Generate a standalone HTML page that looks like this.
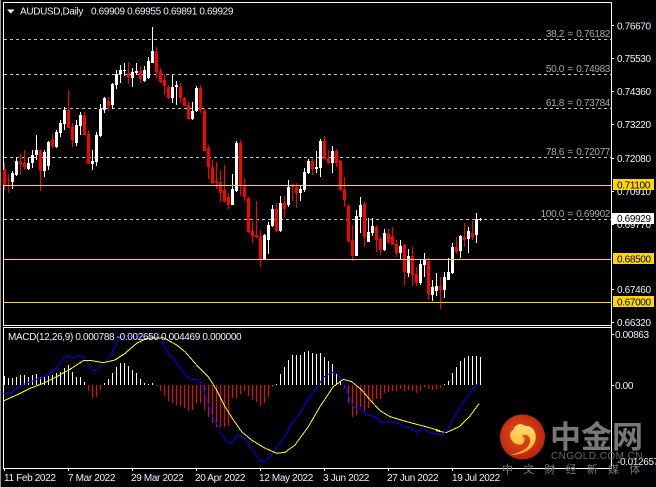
<!DOCTYPE html>
<html><head><meta charset="utf-8"><style>
html,body{margin:0;padding:0;background:#000;width:656px;height:487px;overflow:hidden}
svg{display:block}
text{font-family:"Liberation Sans",sans-serif;font-size:10px;fill:#fff;letter-spacing:-.35px}
.f{fill:#a8a8a8;text-anchor:end;word-spacing:1px}
.k{fill:#000}
.a{fill:#e8f2ff}
</style></head><body>
<svg width="656" height="487" viewBox="0 0 656 487" xmlns="http://www.w3.org/2000/svg">
<defs>
<radialGradient id="rg" cx=".45" cy=".45" r=".6"><stop offset="0" stop-color="#e8541c"/><stop offset="1" stop-color="#b8200e"/></radialGradient>
<linearGradient id="yg" x1="0" y1="0" x2="0" y2="1"><stop offset="0" stop-color="#ffd97a"/><stop offset=".6" stop-color="#ffc53c"/><stop offset="1" stop-color="#f49a1c"/></linearGradient>
</defs>
<rect width="656" height="487" fill="#000"/>
<g fill="none" stroke-width="1" shape-rendering="crispEdges">
<path stroke="#999" d="M.5 0V487"/>
<path stroke="#fff" d="M3 2.5H612M3.5 2V325M611.5 2V468M3 325.5H612M3 327.5H612M3.5 327V468M3 468.5H612"/>
<path stroke="#fff" d="M611 25.5h3M611 58.5h3M611 91.5h3M611 124.5h3M611 158.5h3M611 191.5h3M611 224.5h3M611 289.5h3M611 322.5h3M611 334.5h3M611 385.5h3M4.5 468v3M68.5 468v3M132.5 468v3M196.5 468v3M260.5 468v3M324.5 468v3M388.5 468v3M452.5 468v3"/>
<path stroke="#c0c0c0" stroke-dasharray="3 3" d="M4 39.5H611M4 74.5H611M4 108.5H611M4 157.5H611M4 219.5H611"/>

<!-- white wicks -->
<path stroke="#fff" d="M12.5 171V189M16.5 158V176M28.5 158V170M32.5 150V168M36.5 135V160M44.5 150V177M48.5 141V170M56.5 130V148M60.5 120V137M64.5 107V130M76.5 120V146M80.5 112V135M92.5 150V170M96.5 132V166M100.5 104V137M104.5 97V113M112.5 83V109M116.5 70V89M120.5 65V83M124.5 63V76M132.5 68V87M136.5 63V75M144.5 66V82M148.5 57V79M152.5 27V63M172.5 75V103M176.5 81V105M192.5 102V120M196.5 86V112M232.5 174V205M236.5 141V192M264.5 234V259M268.5 222V254M272.5 205V227M280.5 196V232M288.5 180V207M300.5 185V201M304.5 168V192M308.5 159V174M316.5 151V173M320.5 139V177M332.5 146V173M356.5 210V256M360.5 197V233M368.5 218V242M372.5 218V236M384.5 229V251M400.5 240V259M408.5 249V277M420.5 260V285M424.5 253V277M432.5 280V301M436.5 273V296M444.5 272V298M448.5 258V280M452.5 243V274M460.5 235V258M468.5 227V253M476.5 213V243M480.5 218V221"/>
<!-- white bodies -->
<path stroke="#fff" stroke-width="3" d="M12.5 173V182M16.5 161V175M28.5 163V169M32.5 155V163M36.5 150V155M44.5 152V171M48.5 142V166M56.5 132V147M60.5 123V133M64.5 110V124M76.5 125V143M80.5 115V126M92.5 161V164M96.5 135V162M100.5 109V136M104.5 98V110M112.5 84V105M116.5 74V85M120.5 70V74M124.5 70V71M132.5 72V78M136.5 71V73M144.5 70V81M148.5 61V78M152.5 51V63M172.5 87V98M176.5 85V87M192.5 111V119M196.5 88V111M232.5 189V205M236.5 143V191M264.5 235V259M268.5 225V240M272.5 209V226M280.5 203V231M288.5 187V205M300.5 189V193M304.5 172V190M308.5 161V173M316.5 167V169M320.5 141V168M332.5 151V163M356.5 216V256M360.5 205V217M368.5 232V242M372.5 226V233M384.5 233V250M400.5 246V253M408.5 256V273M420.5 264V283M424.5 260V265M432.5 287V295M436.5 286V291M444.5 277V290M448.5 272V280M452.5 247V273M460.5 236V251M468.5 231V239M476.5 219V235M480.5 219V220"/>
<!-- red wicks -->
<path stroke="#ff0000" d="M4.5 163V190M8.5 174V193M20.5 154V175M24.5 150V170M40.5 150V191M52.5 134V148M68.5 90V128M72.5 123V147M84.5 112V135M88.5 131V164M108.5 97V111M128.5 62V84M140.5 66V83M156.5 47V78M160.5 68V83M164.5 75V95M168.5 85V99M180.5 83V103M184.5 97V106M188.5 102V119M200.5 85V113M204.5 108V151M208.5 145V179M212.5 160V184M216.5 162V189M220.5 170V202M224.5 165V202M228.5 193V209M240.5 140V196M244.5 178V201M248.5 197V233M252.5 221V243M256.5 201V238M260.5 230V267M276.5 203V232M284.5 196V217M292.5 184V201M296.5 183V208M312.5 158V175M324.5 136V160M328.5 150V164M336.5 149V167M340.5 160V191M344.5 177V207M348.5 204V243M352.5 225V261M364.5 202V247M376.5 225V252M380.5 237V255M388.5 229V244M392.5 227V245M396.5 240V257M404.5 244V285M412.5 247V286M416.5 267V286M428.5 258V300M440.5 277V309M456.5 237V254M464.5 223V247M472.5 221V240"/>
<!-- red bodies -->
<path stroke="#ff0000" stroke-width="3" d="M4.5 170V185M8.5 180V181M20.5 162V164M24.5 163V167M40.5 151V171M52.5 140V146M68.5 110V128M72.5 127V140M84.5 116V135M88.5 134V164M108.5 101V106M128.5 73V77M140.5 71V79M156.5 52V72M160.5 71V82M164.5 80V86M168.5 87V98M180.5 87V98M184.5 98V106M188.5 105V119M200.5 88V110M204.5 111V151M208.5 148V167M212.5 167V183M216.5 181V183M220.5 182V193M224.5 190V201M228.5 197V205M240.5 143V185M244.5 187V197M248.5 198V232M252.5 231V236M256.5 235V237M260.5 236V259M276.5 209V231M284.5 203V209M292.5 186V187M296.5 187V193M312.5 161V169M324.5 141V159M328.5 158V163M336.5 151V163M340.5 161V190M344.5 189V200M348.5 206V241M352.5 240V256M364.5 204V237M376.5 227V240M380.5 239V250M388.5 234V242M392.5 236V245M396.5 244V253M404.5 245V272M412.5 256V275M416.5 274V283M428.5 261V294M440.5 286V290M456.5 247V252M464.5 237V240M472.5 233V237"/>

<path stroke="#ffd23c" d="M4 185.5H611M4 259.5H611M4 302.5H611"/>

<!-- histogram white -->
<path stroke="#fff" d="M4.5 385V376M8.5 385V378M12.5 385V378M16.5 385V377M20.5 385V375M24.5 385V375M28.5 385V377M32.5 385V375M36.5 385V374M40.5 385V377M44.5 385V377M48.5 385V376M52.5 385V375M56.5 385V373M60.5 385V372M64.5 385V368M68.5 385V365M72.5 385V372M76.5 385V377M80.5 385V377M84.5 385V382M104.5 385V383M108.5 385V379M112.5 385V373M116.5 385V367M120.5 385V363M124.5 385V363M128.5 385V366M132.5 385V370M136.5 385V373M140.5 385V379M144.5 385V383M148.5 385V384M152.5 385V383M276.5 385V384M280.5 385V374M284.5 385V367M288.5 385V360M292.5 385V355M296.5 385V355M300.5 385V355M304.5 385V352M308.5 385V351M312.5 385V353M316.5 385V354M320.5 385V353M324.5 385V357M328.5 385V361M332.5 385V364M336.5 385V373M340.5 385V382M444.5 385V384M448.5 385V381M452.5 385V373M456.5 385V367M460.5 385V361M464.5 385V358M468.5 385V356M472.5 385V356M476.5 385V356M480.5 385V357"/>
<!-- histogram red -->
<path stroke="#ff0000" d="M88.5 385V391M92.5 385V398M96.5 385V397M100.5 385V390M156.5 385V386M160.5 385V391M164.5 385V396M168.5 385V401M172.5 385V403M176.5 385V405M180.5 385V406M184.5 385V408M188.5 385V411M192.5 385V410M196.5 385V403M200.5 385V403M204.5 385V410M208.5 385V417M212.5 385V423M216.5 385V427M220.5 385V427M224.5 385V427M228.5 385V426M232.5 385V398M236.5 385V398M240.5 385V394M244.5 385V391M248.5 385V396M252.5 385V400M256.5 385V402M260.5 385V406M264.5 385V403M268.5 385V397M272.5 385V387M344.5 385V388M348.5 385V403M352.5 385V417M356.5 385V415M360.5 385V407M364.5 385V411M368.5 385V408M372.5 385V402M376.5 385V399M380.5 385V399M384.5 385V393M388.5 385V392M392.5 385V391M396.5 385V391M400.5 385V389M404.5 385V391M408.5 385V390M412.5 385V391M416.5 385V393M420.5 385V391M424.5 385V387M428.5 385V389M432.5 385V390M436.5 385V389M440.5 385V388"/>
</g>

<!-- MACD lines -->
<g fill="none" stroke-width="3" stroke-linejoin="round" shape-rendering="crispEdges">
<g transform="translate(0 320) scale(.33333)">
<path stroke="#0000ff" d="M10 220L35 218 50 205 70 193 100 182 120 175 140 165 160 152 175 138 190 115 205 108 220 115 240 106 255 115 265 135 280 152 292 150 310 130 325 118 340 90 355 60 370 47 400 50 440 50 470 48 490 70 505 100 525 120 545 150 570 180 590 178 605 190 620 240 640 295 660 328"/>
<path stroke="#ffff00" d="M10 243L50 225 90 205 130 190 170 170 210 148 250 122 275 122 310 128 345 120 375 100 410 70 440 55 490 53 530 75 555 95 590 135 625 170 650 210 660 230"/>
</g>
<g transform="translate(220 320) scale(.33333)">
<path stroke="#0000ff" d="M0 335L10 350 25 368 35 370 50 345 70 350 90 380 105 400 120 423 135 423 155 405 175 375 195 350 215 310 240 280 265 235 290 205 310 172 335 157 350 160 370 185 385 225 400 262 420 265 440 285 465 290 482 307 510 305 540 312 555 322 575 325 590 338 610 325 630 338 660 343"/>
<path stroke="#ffff00" d="M0 230L15 260 40 300 65 335 95 360 130 382 170 400 195 397 225 375 265 320 300 260 340 200 370 178 395 185 425 210 455 245 480 272 510 290 560 305 610 318 660 332"/>
</g>
<g transform="translate(436 320) scale(.33333)">
<path stroke="#ffff00" d="M0 332L30 338 70 320 100 290 130 250"/>
<path stroke="#0000ff" d="M0 343L20 343 35 328 60 280 90 235 110 210 130 185"/>
</g>
</g>

<!-- price boxes -->
<g shape-rendering="crispEdges">
<rect x="613" y="253" width="41" height="11" fill="#ffd700"/>
<rect x="613" y="296" width="41" height="11" fill="#ffd700"/>
</g>

<!-- top text -->
<path d="M7 9.5h7.5L10.7 13.5Z" fill="#fff"/>
<text x="20" y="14.5" class="a">AUDUSD,Daily</text>
<text x="91" y="14.5" class="a">0.69909 0.69955 0.69891 0.69929</text>

<!-- fib labels -->
<text x="610" y="37" class="f">38.2 = 0.76182</text>
<text x="610" y="72" class="f">50.0 = 0.74983</text>
<text x="610" y="106" class="f">61.8 = 0.73784</text>
<text x="610" y="155" class="f">78.6 = 0.72077</text>
<text x="610" y="217" class="f">100.0 = 0.69902</text>

<!-- axis -->
<text x="617" y="29.5" class="a">0.76670</text>
<text x="617" y="62" class="a">0.75530</text>
<text x="617" y="95" class="a">0.74360</text>
<text x="617" y="128" class="a">0.73220</text>
<text x="617" y="162" class="a">0.72080</text>
<text x="617" y="195" class="a">0.70910</text>
<text x="617" y="228" class="a">0.69770</text>
<text x="617" y="293" class="a">0.67460</text>
<text x="617" y="326" class="a">0.66320</text>
<rect x="613" y="179" width="41" height="11" fill="#ffd700" shape-rendering="crispEdges"/>
<rect x="612" y="213" width="42" height="11" fill="#fff" shape-rendering="crispEdges"/>
<text x="617" y="188.5" class="k">0.71100</text>
<text x="617" y="222" class="k">0.69929</text>
<text x="617" y="262.5" class="k">0.68500</text>
<text x="617" y="305.5" class="k">0.67000</text>
<text x="615" y="338" class="a">0.00863</text>
<text x="615" y="389" class="a">0.00</text>
<text x="617" y="465" class="a">-0.012657</text>

<text x="8" y="340" class="a">MACD(12,26,9) 0.000788 -0.002650 0.004469 0.000000</text>

<text x="4" y="481" class="a">11 Feb 2022</text>
<text x="68" y="481" class="a">7 Mar 2022</text>
<text x="131" y="481" class="a">29 Mar 2022</text>
<text x="195" y="481" class="a">20 Apr 2022</text>
<text x="259" y="481" class="a">12 May 2022</text>
<text x="323" y="481" class="a">3 Jun 2022</text>
<text x="387" y="481" class="a">27 Jun 2022</text>
<text x="452" y="481" class="a">19 Jul 2022</text>

<!-- watermark -->
<circle cx="522.5" cy="437" r="22.5" fill="url(#rg)"/>
<g transform="translate(495 410) scale(.33333)">
<path fill="url(#yg)" d="M45 135C85 125 108 110 105 88C103 75 88 70 80 78C88 80 92 90 84 100C72 110 48 100 46 78C44 66 52 62 56 58C58 45 78 36 90 48C105 45 125 60 122 85C120 112 90 135 45 135Z"/>
</g>
<text x="550" y="448" style="font-family:'Noto Sans CJK SC',sans-serif;font-size:31px;font-weight:700;fill:#787878;letter-spacing:0">中金网</text>
<text x="551" y="459" style="font-size:10px;fill:#666;letter-spacing:.45px">CNGOLD.COM.CN</text>
<text x="502" y="473" style="font-family:'Noto Sans CJK SC',sans-serif;font-size:11px;fill:#787878;letter-spacing:10.2px">中文财经新媒体</text>
</svg>
</body></html>
